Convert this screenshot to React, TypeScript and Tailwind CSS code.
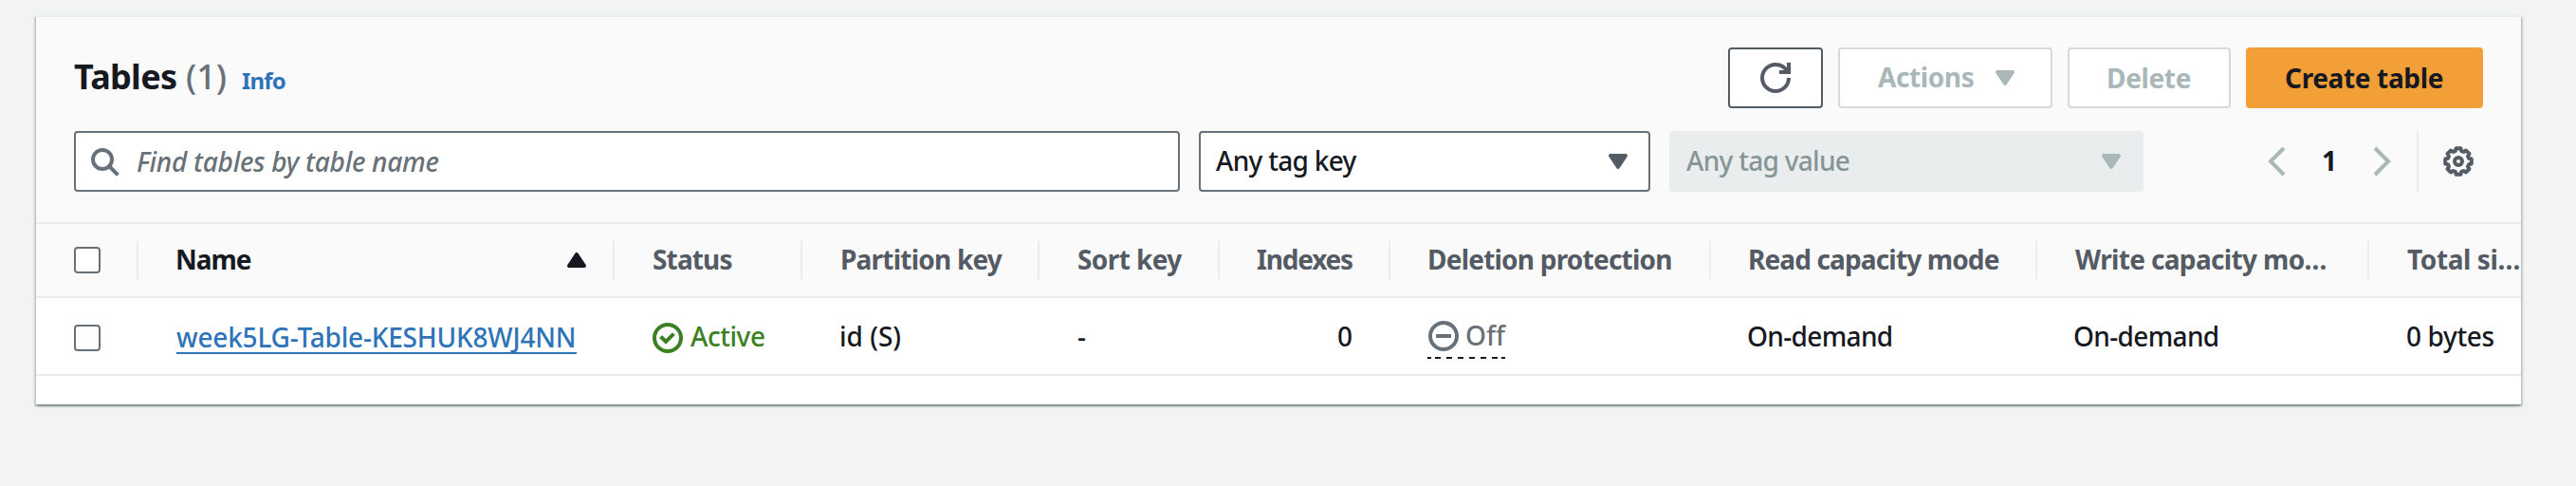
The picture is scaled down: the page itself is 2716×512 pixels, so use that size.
import type { ReactNode } from "react";

function Icon({ children, className = "" }: { children: ReactNode; className?: string }) {
  return (
    <svg viewBox="0 0 16 16" fill="none" stroke="currentColor" strokeWidth={2} className={`size-8 shrink-0 overflow-visible ${className}`}>
      {children}
    </svg>
  );
}

function CaretDown({ className = "" }: { className?: string }) {
  return (
    <Icon className={className}>
      <path d="M4 5h8l-4 6z" fill="currentColor" strokeLinejoin="round" />
    </Icon>
  );
}

const gearPoints = Array.from({ length: 8 }, (_, i) =>
  [
    [7, -10],
    [7, 10],
    [5.7, 16],
    [5.7, 29],
  ].map(([r, a]) => {
    const t = ((i * 45 + a - 90) * Math.PI) / 180;
    return `${(8 + r * Math.cos(t)).toFixed(2)},${(8 + r * Math.sin(t)).toFixed(2)}`;
  }),
)
  .flat()
  .join(" ");

function Checkbox() {
  return <span className="block size-7 rounded-[4px] border-2 border-[#687078] bg-white" />;
}

const grid =
  "grid w-[2700px] grid-cols-[108px_502px_198px_250px_190px_180px_338px_344px_350px_240px]";

const headers = [
  { label: "Status", className: "pl-[40px] tracking-[-0.85px]" },
  { label: "Partition key", className: "pl-[40px] tracking-[-0.78px]" },
  { label: "Sort key", className: "pl-[40px] tracking-[-0.6px]" },
  { label: "Indexes", className: "pl-[39px] tracking-[-1.2px]" },
  { label: "Deletion protection", className: "pl-[39px] tracking-[-0.78px]" },
  { label: "Read capacity mode", className: "pl-[39px] tracking-[-0.86px]" },
  { label: "Write capacity mo…", className: "pl-[40px] tracking-[-0.65px]" },
  { label: "Total si…", className: "pl-[40px] tracking-[-0.4px]" },
];

export default function App() {
  return (
    <div className="h-[512px] w-[2716px] overflow-hidden bg-[#f2f3f3] pt-4 pl-[38px] font-['Noto_Sans',sans-serif] text-[28px] leading-10 font-medium whitespace-nowrap text-[#16191f]">
      <div className="h-[410px] w-[2620px] bg-white shadow-[0_2px_2px_0_rgba(0,28,36,0.3),2px_2px_2px_0_rgba(0,28,36,0.15),-2px_2px_2px_0_rgba(0,28,36,0.15)]">
        <div className="h-[410px] w-full overflow-hidden border-t-2 border-[#eaeded]">
          <header className="h-[218px] border-b-2 border-[#eaeaea] bg-[#fafafa] pt-8 pr-10 pl-10">
            <div className="flex h-16 items-start justify-between">
              <h2 className="flex items-baseline pt-px text-[36px] leading-[60px]">
                <span className="w-[118px] font-bold tracking-[-0.7px]">Tables</span>
                <span className="w-[59px] text-[#687078]">(1)</span>
                <a className="text-[24px] font-bold tracking-[-0.8px] text-[#2e73b8]">Info</a>
              </h2>
              <div className="flex gap-4 leading-[58px] font-bold">
                <button className="flex h-16 w-[100px] items-center justify-center rounded-[4px] border-2 border-[#545b64] bg-white text-[#545b64]">
                  <Icon>
                    <path d="M15 8c0 3.87-3.13 7-7 7s-7-3.13-7-7 3.13-7 7-7c2.79 0 5.2 1.63 6.33 4" />
                    <path d="M10 5h5V0" />
                  </Icon>
                </button>
                <button className="flex h-16 w-[226px] justify-between rounded-[4px] border-2 border-[#d5dbdb] bg-white pr-8 pl-10 tracking-[-0.4px] text-[#aab7b8]">
                  Actions
                  <CaretDown className="mt-3.5" />
                </button>
                <button className="h-16 w-[172px] rounded-[4px] border-2 border-[#d5dbdb] bg-white pl-[39px] text-left tracking-[-0.35px] text-[#aab7b8]">
                  Delete
                </button>
                <button className="h-16 w-[250px] rounded-[4px] border-2 border-[#f29f38] bg-[#f29f38] pl-[39px] text-left tracking-[-0.35px]">
                  Create table
                </button>
              </div>
            </div>
            <div className="mt-6 flex h-16">
              <div className="flex h-16 w-[1166px] items-center rounded-[4px] border-2 border-[#687078] bg-white pl-3.5 text-[#687078]">
                <Icon>
                  <circle cx="7" cy="7" r="5" />
                  <path d="m10.5 10.5 4.7 4.7" />
                </Icon>
                <span className="ml-[18px] tracking-[-0.27px] italic">Find tables by table name</span>
              </div>
              <div className="ml-5 flex h-16 w-[476px] items-center justify-between rounded-[4px] border-2 border-[#687078] bg-white pr-4 pl-4">
                <span className="pb-0.5 tracking-[-0.7px]">Any tag key</span>
                <CaretDown className="text-[#545b64]" />
              </div>
              <div className="ml-5 flex h-16 w-[500px] items-center justify-between rounded-[4px] bg-[#eaeded] pr-[18px] pl-[18px] text-[#879596]">
                <span className="pb-0.5 tracking-[-0.7px]">Any tag value</span>
                <CaretDown className="text-[#aab7b8]" />
              </div>
              <div className="ml-[124px] flex items-center text-[#aab7b8]">
                <Icon>
                  <path d="M12 1 5 8l7 7" />
                </Icon>
                <span className="w-20 pb-0.5 text-center font-bold text-[#16191f]">1</span>
                <Icon>
                  <path d="m4 1 7 7-7 7" />
                </Icon>
              </div>
              <div className="ml-5 flex h-16 items-center border-l-2 border-[#eaeded] pl-[26px] text-[#545b64]">
                <Icon>
                  <polygon points={gearPoints} strokeLinejoin="round" />
                  <circle cx="8" cy="8" r="2" />
                </Icon>
              </div>
            </div>
          </header>

          <div className={`${grid} h-[78px] items-center border-b-2 border-[#eaeaea] bg-[#fafafa] font-bold text-[#545b64]`}>
            <div className="flex h-10 items-center border-r-2 border-[#eaeded] pl-10">
              <Checkbox />
            </div>
            <div className="flex h-10 items-center justify-between border-r-2 border-[#eaeded] pr-[22px] pl-[39px] text-[#16191f]">
              <span className="pb-0.5 tracking-[-1px]">Name</span>
              <Icon>
                <path d="M4 11h8L8 5z" fill="currentColor" strokeLinejoin="round" />
              </Icon>
            </div>
            {headers.map((h) => (
              <div key={h.label} className={`h-10 border-r-2 border-[#eaeded] leading-[38px] ${h.className}`}>
                {h.label}
              </div>
            ))}
          </div>

          <div className={`${grid} h-[82px] items-center border-b-2 border-[#eaeaea]`}>
            <div className="pt-1 pl-10">
              <Checkbox />
            </div>
            <div className="flex pl-10">
              <a className="h-[38px] w-[422px] border-b-2 border-[#2e73b8] tracking-[-0.2px] text-[#2e73b8]">week5LG-Table-KESHUK8WJ4NN</a>
            </div>
            <div className="flex items-center gap-2 pl-10 tracking-[-0.45px] text-[#3b8022]">
              <Icon className="mt-1">
                <circle cx="8" cy="8" r="7" />
                <path d="m5 8 2 2 3.52-3.52" strokeLinecap="square" />
              </Icon>
              Active
            </div>
            <div className="pl-[39px]">id (S)</div>
            <div className="pl-10">-</div>
            <div className="pr-10 text-right">0</div>
            <div className="pt-1.5 pl-[39px]">
              <div className="flex h-[42px] w-[82px] flex-col justify-between">
                <div className="flex h-9 items-center pl-px text-[#687078]">
                  <Icon>
                    <circle cx="8" cy="8" r="7" />
                    <path d="M4 8h8" />
                  </Icon>
                  <span className="ml-[7px] pb-0.5">Off</span>
                </div>
                <svg viewBox="0 0 82 2" className="h-0.5 w-[82px] text-[#16191f]">
                  <path d="M0 1h82" stroke="currentColor" strokeWidth={2} strokeDasharray="4 4 6 6 6 6 6 6 6 6 6 6 6 4 4 4" />
                </svg>
              </div>
            </div>
            <div className="pl-[38px] tracking-[-0.65px]">On-demand</div>
            <div className="pl-[38px] tracking-[-0.65px]">On-demand</div>
            <div className="pl-[39px] tracking-[-0.35px]">0 bytes</div>
          </div>
        </div>
      </div>
    </div>
  );
}
